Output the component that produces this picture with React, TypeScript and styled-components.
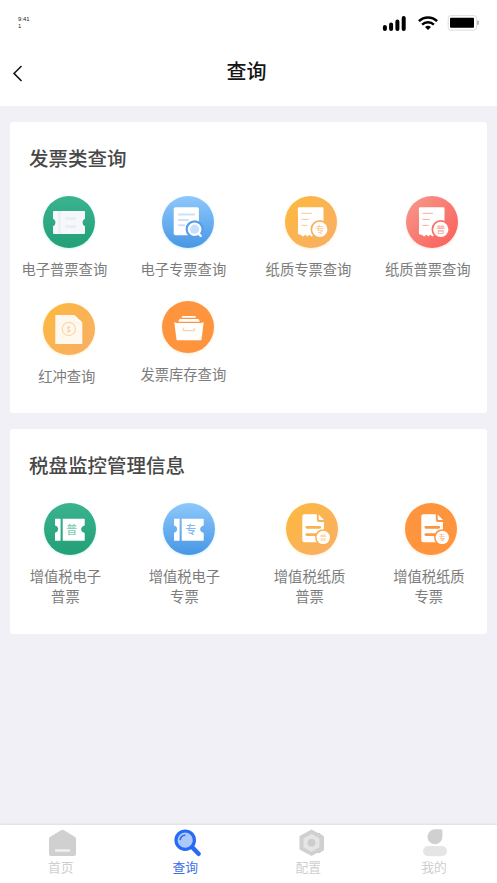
import React from "react";
import styled, { createGlobalStyle } from "styled-components";

const Global = createGlobalStyle`
  * { box-sizing: border-box; }
  body { margin: 0; background: #f1f0f6; font-family: "Noto Sans CJK SC", "Noto Sans", sans-serif; }
`;

const Screen = styled.main`
  width: 497px;
  height: 883px;
  display: flex;
  flex-direction: column;
  overflow: hidden;
  background: #f1f0f6;
`;

const Header = styled.header`
  height: 106px;
  flex: none;
  background: #fff;
`;

const StatusBar = styled.div`
  height: 46px;
  display: flex;
  justify-content: space-between;
  padding: 15px 18px 0 18px;
`;

const Clock = styled.div`
  width: 13px;
  padding-top: 1px;
  font: 5.9px/7px "Liberation Sans", sans-serif;
  color: #222;
`;

const TitleBar = styled.div`
  height: 49px;
  display: grid;
  grid-template-columns: 40px 1fr 44px;
  align-items: center;
`;

const BackButton = styled.button`
  border: 0;
  background: none;
  padding: 5px 0 0 12px;
  display: flex;
`;

const Title = styled.h1`
  margin: 0;
  text-align: center;
  font-size: 20px;
  line-height: 30px;
  font-weight: 500;
  color: #151515;
`;

const Content = styled.div`
  flex: 1;
  display: flex;
  flex-direction: column;
  gap: 16px;
  padding: 16px 10px 0;
`;

const Card = styled.section<{ $height: number }>`
  height: ${(p) => p.$height}px;
  background: #fff;
  border-radius: 3px;
  padding-top: 21px;
`;

const CardTitle = styled.h2`
  margin: 0 0 0 19px;
  font-size: 19.5px;
  line-height: 30px;
  font-weight: 500;
  color: #484848;
`;

const Grid = styled.div<{ $indent: number }>`
  display: grid;
  grid-template-columns: 119px 125.2px 119.3px 86px;
  padding: 23px 0 0 ${(p) => p.$indent}px;
`;

const Entry = styled.div<{ $top?: number }>`
  width: 86px;
  padding-top: ${(p) => p.$top ?? 0}px;
`;

const tones = {
  green: ["linear-gradient(#3ab38e, #23a078)", "#d5f7ef"],
  blue: ["linear-gradient(#8ec8fb, #4797e5)", "#d3efff"],
  amber: ["linear-gradient(135deg, #fdb93d, #f8ae68)", "#fff0c9"],
  red: ["linear-gradient(135deg, #f59b8c, #fc5b58)", "#ffe1e1"],
  orange: ["#ff943e", "#ffebd6"],
} as const;
type Tone = keyof typeof tones;

const Badge = styled.div<{ $tone: Tone; $left: number }>`
  width: 52px;
  height: 52px;
  margin-left: ${(p) => p.$left}px;
  border-radius: 50%;
  background: ${(p) => tones[p.$tone][0]};
  box-shadow: 0 1px 3px ${(p) => tones[p.$tone][1]};
  svg { display: block; }
`;

const Label = styled.div<{ $shift?: number }>`
  margin: 11px 0 0 ${(p) => p.$shift ?? 0}px;
  font-size: 14.3px;
  line-height: 20px;
  text-align: center;
  white-space: pre;
  color: #7c7c7c;
`;

const TabBar = styled.nav`
  height: 58px;
  flex: none;
  background: #fff;
  box-shadow: 0 -1px 2px #dddce2;
  display: grid;
  grid-template-columns: 124px 124px 124px 125px;
`;

const Tab = styled.div<{ $active?: boolean; $nudge: number }>`
  padding: 4px 0 0 ${(p) => p.$nudge}px;
  font-size: 12.8px;
  line-height: 20px;
  color: ${(p) => (p.$active ? "#3a6fe8" : "#cfcfcf")};
  svg { display: block; }
`;

const TabText = styled.div<{ $shift: number }>`
  margin: 0 0 0 ${(p) => p.$shift}px;
  white-space: nowrap;
`;

const Glyph = ({ children }: { children: React.ReactNode }) => (
  <svg width="52" height="52" viewBox="0 0 52 52" fill="none">{children}</svg>
);

const Char = ({ x, y, size, color, children }: { x: number; y: number; size: number; color: string; children: string }) => (
  <text x={x} y={y} fontSize={size} fill={color} textAnchor="middle" fontWeight="500">{children}</text>
);

const Ticket = () => (
  <Glyph>
    <path d="M11 15h30a1 1 0 0 1 1 1v6.8a4 4 0 0 0 0 7.4V37a1 1 0 0 1-1 1H11a1 1 0 0 1-1-1v-6.800a4 4 0 0 0 0-7.400V16a1 1 0 0 1 1-1Z" fill="#f5f7fa" />
    <path d="M15 15h3v23h-3z" fill="#ebf1f3" />
    <path d="M22.5 21h10.5v3H22.5zM22.5 29h10.5v3H22.5z" fill="#e9eef2" />
  </Glyph>
);

const SearchDoc = () => (
  <Glyph>
    <rect x="11.7" y="11.3" width="25.2" height="28" rx="1.8" fill="#fff" />
    <path d="M17 18.6h15.3M17 24h9M17 29.2h5.3" stroke="#cde2fa" strokeWidth="2" strokeLinecap="round" />
    <circle cx="32.6" cy="33.2" r="9" fill="#569fe9" />
    <circle cx="32.6" cy="33.2" r="6.8" fill="#fff" />
    <circle cx="32.6" cy="33.2" r="4.6" fill="#c9e0fb" />
    <path d="m36.5 37.5 2.2 2.4" stroke="#fff" strokeWidth="2.3" strokeLinecap="round" />
  </Glyph>
);

const Receipt = ({ char, line, gap }: { char: string; line: string; gap: string }) => (
  <Glyph>
    <path d="M13 11.3h24.5a1 1 0 0 1 1 1v28H35l-2-1.500-2.200 1.700-1.800-1.700-2.400 1.700-2.200-1.700-2 1.700-2-1.700-2.200 1.700-2.200-1.500-1.600-.5-1.500-.5.2-13-.3-12.500a1 1 0 0 1 1-1Z" fill="#fff" />
    <path d="M16.5 17.3H27M16.5 23.4h7.3M16.5 29.4h6" stroke={line} strokeWidth="1" />
    <circle cx="34.8" cy="33.4" r="9.3" fill={gap} />
    <path d="M30.5 41.500h9v-6z" fill={gap} />
    <circle cx="34.8" cy="33.4" r="7.6" fill="#fff" />
    <Char x={34.8} y={36.7} size={9} color={line}>{char}</Char>
  </Glyph>
);

const CoinDoc = () => (
  <Glyph>
    <path d="M12.3 12h19l8 8v21h-27Z" fill="#fff8ef" />
    <path d="M31.3 12v7.3h8" fill="#fff" stroke="#fee5c9" strokeWidth=".6" />
    <circle cx="25.8" cy="26" r="6.6" stroke="#fdd6ad" strokeWidth="1.2" />
    <text x="25.8" y="28.5" fontSize="7" fontWeight="700" textAnchor="middle" fill="#fcc890">$</text>
  </Glyph>
);

const Tray = () => (
  <Glyph>
    <path d="M20.5 15h12.7l1 1.7H19.4zM17.5 18h19l1.4 2.8H16.2z" fill="#fff" />
    <path d="M12.3 21.2 15 22h24l2.7-.8-2.2 17.2a1 1 0 0 1-1 .9h-23a1 1 0 0 1-1-.9Z" fill="#fff" />
    <path d="M21.500 26.700v3h10.700v-3" stroke="#ffd1ab" strokeWidth="1.3" />
  </Glyph>
);

const StubTicket = ({ char, color }: { char: string; color: string }) => (
  <Glyph>
    <path d="M11 15.7h5.6v22H11v-7.9c3.8-.5 4.7-6.2 0-7.2ZM18.7 15.7h21.4a.6.6 0 0 1 .6.6v6.3c-4.7 1-4.7 6.4 0 7.4V37a.6.6 0 0 1-.6.7H18.7Z" fill="#fff" />
    <Char x={27.8} y={30.7} size={11} color={color}>{char}</Char>
  </Glyph>
);

const FoldedDoc = ({ char, color, ink }: { char: string; color: string; ink: string }) => (
  <Glyph>
    <path d="M18.3 11.3h12.5v5.2a2.5 2.5 0 0 0 2.5 2.5H38v20.3H18.3a2 2 0 0 1-2-2v-24a2 2 0 0 1 2-2Z" fill="#fff" />
    <path d="M32.7 11.5 38 17.1h-4.3a1 1 0 0 1-1-1z" fill="#fff" />
    <path d="M20.8 24.3h13M20.8 31.6h12" stroke={color} strokeWidth="2.7" strokeLinecap="round" />
    <circle cx="37.3" cy="34.4" r="8.2" fill={color} />
    <path d="M32 41h8v-4z" fill={color} />
    <circle cx="37.3" cy="34.4" r="6.7" fill="#fff" />
    <Char x={37.3} y={36.9} size={7} color={ink}>{char}</Char>
  </Glyph>
);

type Item = { tone: Tone; left: number; label: string; icon: React.ReactNode; top?: number; shift?: number };

const queries: Item[] = [
  { tone: "green", left: 21.7, label: "电子普票查询", icon: <Ticket /> },
  { tone: "blue", left: 21.8, label: "电子专票查询", icon: <SearchDoc /> },
  { tone: "amber", left: 19.5, label: "纸质专票查询", icon: <Receipt char="专" line="#fbc995" gap="#f9b157" /> },
  { tone: "red", left: 21, label: "纸质普票查询", icon: <Receipt char="普" line="#faaba2" gap="#f97068" /> },
  { tone: "amber", left: 21.7, label: "红冲查询", icon: <CoinDoc />, top: 24, shift: 5 },
  { tone: "orange", left: 21.8, label: "发票库存查询", icon: <Tray />, top: 21.5 },
];

const disks: Item[] = [
  { tone: "green", left: 21.5, label: "增值税电子\n普票", icon: <StubTicket char="普" color="#7bcdb2" /> },
  { tone: "blue", left: 21.5, label: "增值税电子\n专票", icon: <StubTicket char="专" color="#82b9f1" /> },
  { tone: "amber", left: 19.3, label: "增值税纸质\n普票", icon: <FoldedDoc char="普" color="#f9b250" ink="#fcd3a0" /> },
  { tone: "orange", left: 19.5, label: "增值税纸质\n专票", icon: <FoldedDoc char="专" color="#ff943e" ink="#ffb67e" /> },
];

const Entries = ({ items, indent }: { items: Item[]; indent: number }) => (
  <Grid $indent={indent}>
    {items.map((it) => (
      <Entry key={it.label} $top={it.top}>
        <Badge $tone={it.tone} $left={it.left}>{it.icon}</Badge>
        <Label $shift={it.shift}>{it.label}</Label>
      </Entry>
    ))}
  </Grid>
);

export default function App() {
  return (
    <Screen>
      <Global />
      <Header>
        <StatusBar>
          <Clock>9:41 1</Clock>
          <svg width="97" height="17" viewBox="0 0 97 17" fill="none">
            <path d="M2.9 12.1v1.8M9.1 9.6v4.3M15.4 6.4v7.5M21.7 3.1v10.8" stroke="#000" strokeWidth="4" strokeLinecap="round" />
            <path d="M36.9 6.2a13 13 0 0 1 18.2 0" stroke="#000" strokeWidth="2.5" />
            <path d="M40.1 9.7a8.3 8.3 0 0 1 11.8 0" stroke="#000" strokeWidth="2.4" />
            <path d="M43 12.1a4.3 4.3 0 0 1 6 0l-3 3Z" fill="#000" />
            <rect x="66.2" y=".6" width="28.4" height="14.6" rx="2.5" stroke="#dedede" />
            <rect x="68" y="2.8" width="24" height="10" rx=".8" fill="#000" />
            <path d="M96 5.7v4" stroke="#999" strokeWidth="1.3" />
          </svg>
        </StatusBar>
        <TitleBar>
          <BackButton aria-label="返回">
            <svg width="12" height="18" viewBox="0 0 12 18" fill="none">
              <path d="M9.5 2 2 9.4 9.5 17" stroke="#111" strokeWidth="1.5" />
            </svg>
          </BackButton>
          <Title>查询</Title>
        </TitleBar>
      </Header>
      <Content>
        <Card $height={291}>
          <CardTitle>发票类查询</CardTitle>
          <Entries items={queries} indent={11.3} />
        </Card>
        <Card $height={205}>
          <CardTitle>税盘监控管理信息</CardTitle>
          <Entries items={disks} indent={12.4} />
        </Card>
      </Content>
      <TabBar>
        <Tab $nudge={49}>
          <svg width="27" height="28" viewBox="0 0 27 28" fill="none">
            <path d="M12.4 1a2 2 0 0 1 2.2 0l11.1 6.8c.8.5 1.3 1.2 1.3 2V25a2 2 0 0 1-2 2H2a2 2 0 0 1-2-2V9.8c0-.8.5-1.5 1.3-2Z" fill="#d0d0d0" />
            <path d="M7 21.6h13" stroke="#f1f1f1" strokeWidth="2.5" strokeLinecap="round" />
          </svg>
          <TabText $shift={-1}>首页</TabText>
        </Tab>
        <Tab $nudge={49.5} $active>
          <svg width="27" height="28" viewBox="0 0 27 28" fill="none">
            <path d="m18.5 18.5 6 6.300" stroke="#286af3" strokeWidth="4.5" strokeLinecap="round" />
            <circle cx="11.2" cy="11.2" r="9.2" fill="#adc9fb" stroke="#286af3" strokeWidth="3.2" />
            <path d="M6.2 10.5a5.3 5.3 0 0 1 4.6-4.300" stroke="#286af3" strokeWidth="1.6" strokeLinecap="round" />
          </svg>
          <TabText $shift={-1}>查询</TabText>
        </Tab>
        <Tab $nudge={50.5}>
          <svg width="27" height="28" viewBox="0 0 27 28" fill="none">
            <path d="M17 4h3.5L24.8 8v13l-4.3 3H17z" fill="#c5c5c5" />
            <path d="m12.5.5 12 6.6v13.5l-12 6.5-12-6.5V7.1Z" fill="#d0d0d0" />
            <path d="m12.5 5 7.9 4.5v8.7l-7.9 4.6-7.9-4.6V9.5Z" fill="#e5e5e5" />
            <circle cx="12.5" cy="13.7" r="3.9" fill="#cdcdcd" />
          </svg>
          <TabText $shift={-3}>配置</TabText>
        </Tab>
        <Tab $nudge={51.3}>
          <svg width="27" height="28" viewBox="0 0 27 28" fill="none">
            <path d="M4.5 7.8A7.6 7.6 0 0 1 12.1.2h5.8a1.500 1.500 0 0 1 1.5 1.5v6a7.450 7.450 0 0 1-14.9 0Z" fill="#d0d0d0" />
            <rect x="0" y="17" width="24" height="10.2" rx="5.1" fill="#e5e5e5" />
          </svg>
          <TabText $shift={-2}>我的</TabText>
        </Tab>
      </TabBar>
    </Screen>
  );
}
